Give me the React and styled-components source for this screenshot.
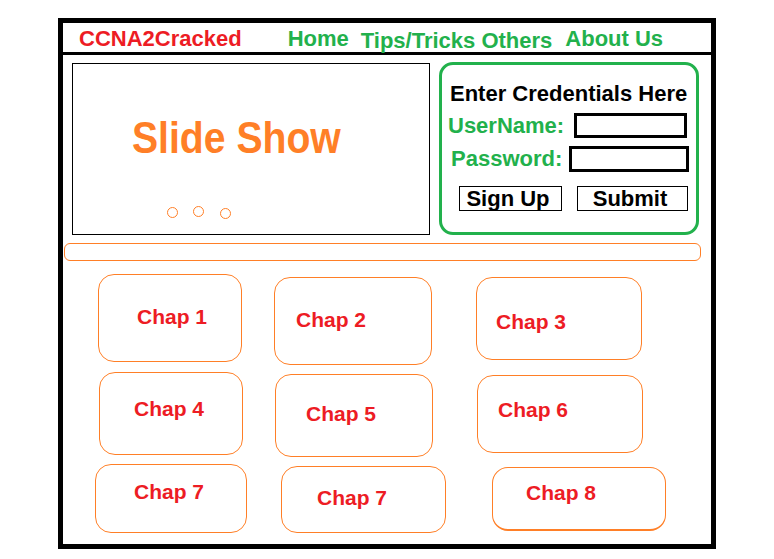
import React from 'react';
import styled, { createGlobalStyle } from 'styled-components';

const RED = '#ed1c24';
const GREEN = '#22b14c';
const ORANGE = '#ff7f27';

const GlobalStyle = createGlobalStyle`
  html, body {
    margin: 0;
    padding: 0;
    background: #fff;
  }
  body {
    font-family: "Liberation Sans", Arial, sans-serif;
  }
`;

const Frame = styled.div`
  box-sizing: border-box;
  width: 658px;
  height: 531px;
  margin: 18px 0 0 58px;
  border: 5px solid #000;
  display: flex;
  flex-direction: column;
`;

const Header = styled.header`
  height: 29px;
  border-bottom: 3px solid #000;
  display: flex;
  align-items: flex-start;
  padding-left: 16px;
  font-size: 22px;
  font-weight: bold;
  line-height: 28px;
`;

const Logo = styled.div`
  color: ${RED};
  margin-top: 2px;
`;

const Nav = styled.nav`
  display: flex;
  margin-left: 46px;
`;

const NavLink = styled.a`
  color: ${GREEN};
  text-decoration: none;
  margin-top: ${(p) => p.$drop || 2}px;
  margin-left: ${(p) => p.$gap || 0}px;
`;

const Content = styled.main`
  display: flex;
  flex-direction: column;
  padding-top: 7px;
`;

const TopRow = styled.section`
  display: flex;
  align-items: flex-start;
  gap: 9px;
  padding-left: 9px;
`;

const SlideBox = styled.div`
  box-sizing: border-box;
  width: 358px;
  height: 172px;
  margin-top: 1px;
  border: 1px solid #000;
  padding: 52px 0 0 59px;
  display: flex;
  flex-direction: column;
`;

const SlideTitle = styled.div`
  color: ${ORANGE};
  font-size: 45px;
  font-weight: bold;
  line-height: 44px;
  transform: scaleX(0.87);
  transform-origin: left center;
  white-space: nowrap;
`;

const Dots = styled.div`
  display: flex;
  align-items: flex-start;
  margin: 46px 0 0 35px;
`;

const Dot = styled.span`
  box-sizing: border-box;
  width: 11px;
  height: 11px;
  border: 1px solid ${ORANGE};
  border-radius: 50%;
  margin-top: ${(p) => p.$dy || 0}px;
  margin-left: ${(p) => p.$dx || 0}px;
`;

const LoginBox = styled.form`
  box-sizing: border-box;
  width: 260px;
  height: 173px;
  border: 3px solid ${GREEN};
  border-radius: 14px;
  padding-top: 18px;
  display: flex;
  flex-direction: column;
  font-size: 22px;
  font-weight: bold;
`;

const LoginTitle = styled.div`
  color: #000;
  line-height: 22px;
  padding-left: 8px;
  white-space: nowrap;
`;

const FieldRow = styled.label`
  display: flex;
  align-items: center;
  height: ${(p) => p.$h}px;
  margin-top: ${(p) => p.$mt}px;
  padding-left: ${(p) => p.$pl}px;
`;

const FieldLabel = styled.span`
  color: ${GREEN};
  line-height: 22px;
`;

const FieldInput = styled.input`
  box-sizing: border-box;
  width: ${(p) => p.$w}px;
  height: 100%;
  margin: 0 ${(p) => p.$mr}px 0 auto;
  border: 3px solid #000;
  padding: 0;
  background: #fff;
  outline: none;
`;

const ButtonRow = styled.div`
  display: flex;
  gap: 15px;
  height: 25px;
  margin-top: 14px;
  padding-left: 17px;
`;

const Button = styled.button`
  box-sizing: border-box;
  width: ${(p) => p.$w}px;
  height: 100%;
  border: 1px solid #000;
  background: #fff;
  padding: 0 5px 0 0;
  font-family: inherit;
  font-size: 22px;
  font-weight: bold;
  line-height: 22px;
  color: #000;
`;

const Divider = styled.div`
  box-sizing: border-box;
  width: 637px;
  height: 18px;
  margin: 8px 0 0 1px;
  border: 1px solid ${ORANGE};
  border-radius: 6px;
`;

const Chapters = styled.section`
  display: flex;
  flex-direction: column;
  margin-top: 13px;
`;

const ChapterRow = styled.div`
  display: flex;
  align-items: flex-start;
  height: ${(p) => p.$h}px;
`;

const Card = styled.div`
  box-sizing: border-box;
  width: ${(p) => p.$w}px;
  height: ${(p) => p.$h}px;
  margin-left: ${(p) => p.$ml}px;
  margin-top: ${(p) => p.$mt || 0}px;
  padding: ${(p) => p.$pt}px 0 0 ${(p) => p.$pl}px;
  border: 1px solid ${ORANGE};
  border-bottom-width: ${(p) => (p.$thick ? 2 : 1)}px;
  border-radius: 16px;
  color: ${RED};
  font-size: 21px;
  font-weight: bold;
  line-height: 21px;
  white-space: nowrap;
`;

const rows = [
  {
    h: 98,
    cards: [
      { label: 'Chap 1', w: 144, h: 88, ml: 35, mt: 0, pl: 38, pt: 31 },
      { label: 'Chap 2', w: 158, h: 88, ml: 32, mt: 3, pl: 21, pt: 31 },
      { label: 'Chap 3', w: 166, h: 83, ml: 44, mt: 3, pl: 19, pt: 33 },
    ],
  },
  {
    h: 92,
    cards: [
      { label: 'Chap 4', w: 144, h: 83, ml: 36, mt: 0, pl: 34, pt: 25 },
      { label: 'Chap 5', w: 158, h: 83, ml: 32, mt: 2, pl: 30, pt: 28 },
      { label: 'Chap 6', w: 166, h: 78, ml: 44, mt: 3, pl: 20, pt: 23 },
    ],
  },
  {
    h: 72,
    cards: [
      { label: 'Chap 7', w: 152, h: 69, ml: 32, mt: 0, pl: 38, pt: 16 },
      { label: 'Chap 7', w: 165, h: 67, ml: 34, mt: 2, pl: 35, pt: 20 },
      { label: 'Chap 8', w: 174, h: 64, ml: 46, mt: 3, pl: 33, pt: 14, thick: true },
    ],
  },
];

export default function App() {
  return (
    <>
      <GlobalStyle />
      <Frame>
        <Header>
          <Logo>CCNA2Cracked</Logo>
          <Nav>
            <NavLink href="#">Home</NavLink>
            <NavLink href="#" $gap={12} $drop={4}>
              Tips/Tricks Others
            </NavLink>
            <NavLink href="#" $gap={13}>About Us</NavLink>
          </Nav>
        </Header>

        <Content>
          <TopRow>
            <SlideBox>
              <SlideTitle>Slide Show</SlideTitle>
              <Dots>
                <Dot $dy={1} />
                <Dot $dx={15} />
                <Dot $dx={16} $dy={2} />
              </Dots>
            </SlideBox>

            <LoginBox onSubmit={(e) => e.preventDefault()}>
              <LoginTitle>Enter Credentials Here</LoginTitle>
              <FieldRow $h={25} $mt={8} $pl={6}>
                <FieldLabel>UserName:</FieldLabel>
                <FieldInput $w={113} $mr={9} />
              </FieldRow>
              <FieldRow $h={26} $mt={8} $pl={9}>
                <FieldLabel>Password:</FieldLabel>
                <FieldInput type="password" $w={120} $mr={7} />
              </FieldRow>
              <ButtonRow>
                <Button type="button" $w={103}>Sign Up</Button>
                <Button type="submit" $w={111}>Submit</Button>
              </ButtonRow>
            </LoginBox>
          </TopRow>

          <Divider />

          <Chapters>
            {rows.map((row, i) => (
              <ChapterRow key={i} $h={row.h}>
                {row.cards.map((c, j) => (
                  <Card
                    key={j}
                    $w={c.w}
                    $h={c.h}
                    $ml={c.ml}
                    $mt={c.mt}
                    $pl={c.pl}
                    $pt={c.pt}
                    $thick={c.thick}
                  >
                    {c.label}
                  </Card>
                ))}
              </ChapterRow>
            ))}
          </Chapters>
        </Content>
      </Frame>
    </>
  );
}
